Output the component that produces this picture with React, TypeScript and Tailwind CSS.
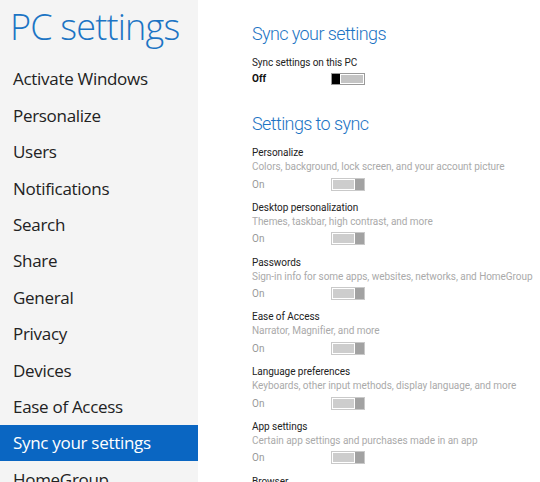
import React from "react";

const nav = [
  "Activate Windows",
  "Personalize",
  "Users",
  "Notifications",
  "Search",
  "Share",
  "General",
  "Privacy",
  "Devices",
  "Ease of Access",
  "Sync your settings",
  "HomeGroup",
];

const items = [
  ["Personalize", "Colors, background, lock screen, and your account picture"],
  ["Desktop personalization", "Themes, taskbar, high contrast, and more"],
  ["Passwords", "Sign-in info for some apps, websites, networks, and HomeGroup"],
  ["Ease of Access", "Narrator, Magnifier, and more"],
  ["Language preferences", "Keyboards, other input methods, display language, and more"],
  ["App settings", "Certain app settings and purchases made in an app"],
  ["Browser", "Settings and info like history and favorites"],
];

function Toggle({ on }: { on: boolean }) {
  if (!on) {
    return (
      <div className="flex h-[12px] w-[34px] shrink-0 border border-[#9a9a9a] bg-white">
        <div className="h-full w-[8px] bg-black" />
        <div className="m-[1px] flex-1 bg-[#c4c4c4]" />
      </div>
    );
  }
  return (
    <div className="flex h-[13px] w-[34px] shrink-0 border border-[#c9c9c9] bg-white">
      <div className="m-[1px] flex-1 bg-[#cdcdcd]" />
      <div className="h-full w-[9px] bg-[#a2a2a2]" />
    </div>
  );
}

export default function App() {
  return (
    <div
      className="flex h-[482px] w-[540px] overflow-hidden bg-white"
      style={{ fontFamily: '"Open Sans", "Noto Sans", sans-serif' }}
    >
      <div className="flex w-[198px] shrink-0 flex-col bg-[#f4f4f4]">
        <div className="pl-[10px] pt-[3px] text-[36px] font-light leading-[48px] tracking-[-0.8px] text-[#1c74c4]">
          PC settings
        </div>
        <div className="mt-[10px] flex flex-col">
          {nav.map((n) => {
            const sel = n === "Sync your settings";
            return (
              <div
                key={n}
                className={
                  "flex h-[36.4px] shrink-0 items-center whitespace-nowrap pl-[13px] text-[17px] tracking-[-0.3px] " +
                  (sel ? "bg-[#0a66c2] text-white" : "text-[#222]")
                }
              >
                {n}
              </div>
            );
          })}
        </div>
      </div>
      <div
        className="flex flex-1 flex-col pl-[54px] pt-[21px]"
        style={{ fontFamily: 'Roboto, "Open Sans", sans-serif' }}
      >
        <div className="whitespace-nowrap text-[18px] font-light leading-[26px] tracking-[-0.6px] text-[#1c74c4]">
          Sync your settings
        </div>
        <div className="mt-[8px] whitespace-nowrap text-[10px] leading-[16px] tracking-[-0.1px] text-[#222]">
          Sync settings on this PC
        </div>
        <div className="flex h-[18px] items-center">
          <div className="w-[79px] text-[10px] font-bold text-[#111]">Off</div>
          <Toggle on={false} />
        </div>
        <div className="mt-[25px] whitespace-nowrap text-[18px] font-light leading-[26px] tracking-[-0.6px] text-[#1c74c4]">
          Settings to sync
        </div>
        <div className="mt-[9px] flex flex-col">
          {items.map(([t, d]) => (
            <div key={t} className="flex h-[54.8px] shrink-0 flex-col">
              <div className="whitespace-nowrap text-[10px] leading-[14px] tracking-[-0.05px] text-[#222]">{t}</div>
              <div className="whitespace-nowrap text-[10px] leading-[14px] tracking-[-0.05px] text-[#aaa]">{d}</div>
              <div className="mt-[1px] flex h-[18px] items-center">
                <div className="w-[79px] text-[10px] text-[#999]">On</div>
                <Toggle on={true} />
              </div>
            </div>
          ))}
        </div>
      </div>
    </div>
  );
}
